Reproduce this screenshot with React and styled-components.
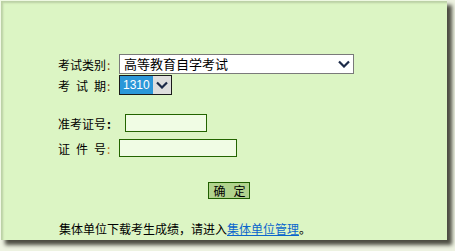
import React from "react";
import styled, { createGlobalStyle } from "styled-components";

const Global = createGlobalStyle`
  html, body { margin: 0; padding: 0; background: #eef3e2; }
  body { font-family: "Noto Sans CJK SC", "Liberation Sans", sans-serif; font-size: 12px; color: #000; }
`;

const Page = styled.div`
  width: 455px;
  height: 251px;
  overflow: hidden;
`;

const Panel = styled.div`
  box-sizing: border-box;
  width: 447px;
  height: 240px;
  background: #dcf5c4;
  border-top: 1px solid #eef8e2;
  border-left: 1px solid #f1f9e6;
  box-shadow: 5px 5px 4px #4c4c42, inset 2px 2px 2px rgba(90, 100, 70, 0.25);
  padding: 53px 0 0 57px;
  display: flex;
  flex-direction: column;
`;

const Row = styled.div`
  display: flex;
  align-items: flex-end;
  height: ${(p) => p.$h}px;
  margin-top: ${(p) => p.$mt || 0}px;
`;

const Label = styled.span`
  width: ${(p) => p.$w}px;
  flex: none;
  font-size: 12px;
  line-height: 14px;
  padding-bottom: ${(p) => p.$pb ?? 2}px;
  white-space: pre;
`;

const Spaced = styled.span`
  letter-spacing: 6px;
`;

const Colon = styled.span`
  color: ${(p) => p.$c || "#000"};
  font-weight: ${(p) => (p.$bold ? 700 : 400)};
  margin-left: 1px;
`;

const SelectBox = styled.div`
  box-sizing: border-box;
  display: flex;
  align-items: center;
  width: ${(p) => p.$w}px;
  height: 20px;
  border: 1px solid ${(p) => p.$border};
  background: #fff;
`;

const SelectText = styled.span`
  flex: 1;
  padding-left: 4px;
  font-size: 13px;
  line-height: 18px;
  font-family: "Noto Sans CJK SC", sans-serif;
`;

const Chevron = styled.svg`
  flex: none;
  width: 12px;
  height: 8px;
  margin-right: ${(p) => p.$mr}px;
`;

const Highlight = styled.span`
  box-sizing: border-box;
  width: 33px;
  height: 18px;
  background: #2b97d8;
  color: #fff;
  font-family: "Liberation Sans", sans-serif;
  font-size: 12px;
  line-height: 18px;
  padding-left: 3px;
`;

const DropButton = styled.span`
  flex: 1;
  height: 18px;
  background: #dedede;
  display: flex;
  align-items: center;
  justify-content: center;
`;

const TextInput = styled.input`
  box-sizing: border-box;
  width: ${(p) => p.$w}px;
  height: 18px;
  border: 1px solid #236400;
  background: #f0fce4;
  margin: 0;
  padding: 0 2px;
  outline: none;
`;

const ButtonRow = styled.div`
  display: flex;
  margin-top: 25px;
  padding-left: 150px;
`;

const Button = styled.button`
  box-sizing: border-box;
  width: 42px;
  height: 17px;
  background: #b1d38d;
  border: 1px solid #1f5e00;
  padding: 0 0 0 1px;
  margin: 0;
  font-family: "Noto Sans CJK SC", sans-serif;
  font-size: 12px;
  line-height: 15px;
  color: #000;
  white-space: pre;
`;

const ButtonGap = styled.span`
  letter-spacing: 8px;
`;

const Notice = styled.p`
  margin: 22px 0 0 1px;
  font-size: 12px;
  line-height: 15px;
`;

const Link = styled.a`
  color: #0a66cc;
  text-decoration: underline;
`;

const ChevronIcon = ({ mr }) => (
  <Chevron $mr={mr} viewBox="0 0 12 8">
    <polyline points="1,1.5 6,6.5 11,1.5" fill="none" stroke="#1c2a48" strokeWidth="2.2" />
  </Chevron>
);

export default function App() {
  return (
    <Page>
      <Global />
      <Panel>
        <Row $h={20}>
          <Label $w={61}>
            考试类别<Colon $c="#8a3a10">:</Colon>
          </Label>
          <SelectBox $w={235} $border="#7a7a7a">
            <SelectText>高等教育自学考试</SelectText>
            <ChevronIcon mr={3} />
          </SelectBox>
        </Row>
        <Row $h={20} $mt={1}>
          <Label $w={61}>
            <Spaced>考试</Spaced>期<Colon $c="#8a3a10">:</Colon>
          </Label>
          <SelectBox $w={53} $border="#1a1a1a">
            <Highlight>1310</Highlight>
            <DropButton>
              <ChevronIcon mr={0} />
            </DropButton>
          </SelectBox>
        </Row>
        <Row $h={18} $mt={19}>
          <Label $w={67} $pb={1}>
            准考证号<Colon $bold>:</Colon>
          </Label>
          <TextInput $w={82} />
        </Row>
        <Row $h={18} $mt={7}>
          <Label $w={61} $pb={1}>
            <Spaced>证件</Spaced>号<Colon $c="#c07020">:</Colon>
          </Label>
          <TextInput $w={118} />
        </Row>
        <ButtonRow>
          <Button>
            <ButtonGap>确</ButtonGap>定
          </Button>
        </ButtonRow>
        <Notice>
          集体单位下载考生成绩，请进入<Link href="#">集体单位管理</Link>。
        </Notice>
      </Panel>
    </Page>
  );
}
